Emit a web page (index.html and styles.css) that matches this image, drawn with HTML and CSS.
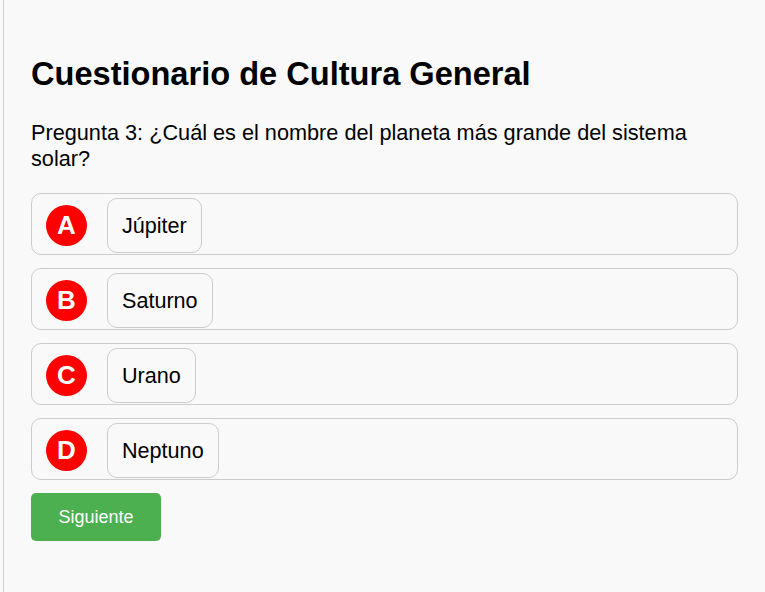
FILE: index.html
```html
<!DOCTYPE html>
<html lang="es">
<head>
<meta charset="utf-8">
<title>Cuestionario de Cultura General</title>
<link rel="stylesheet" href="styles.css">
</head>
<body>
<div class="quiz">
  <h1 class="title">Cuestionario de Cultura General</h1>
  <p class="question">Pregunta 3: ¿Cuál es el nombre del planeta más grande del sistema solar?</p>
  <div class="options">
    <div class="option"><span class="letter">A</span><button class="answer">Júpiter</button></div>
    <div class="option"><span class="letter">B</span><button class="answer">Saturno</button></div>
    <div class="option"><span class="letter">C</span><button class="answer">Urano</button></div>
    <div class="option"><span class="letter">D</span><button class="answer">Neptuno</button></div>
  </div>
  <button class="next">Siguiente</button>
</div>
</body>
</html>
```
FILE: styles.css
```css
html, body {
  margin: 0;
  padding: 0;
  background: #f9f9f9;
}

body {
  font-family: "Liberation Sans", Arial, sans-serif;
  color: #000;
  height: 592px;
}

.quiz {
  margin-left: 3px;
  border-left: 1px solid #cfcfcf;
  padding: 55px 27px 0 27px;
  min-height: 592px;
  box-sizing: border-box;
}

.title {
  margin: 0 0 28px 0;
  font-size: 32.6px;
  line-height: 37px;
  font-weight: bold;
}

.question {
  margin: 0 0 21px 0;
  font-size: 21.7px;
}

.options {
  display: flex;
  flex-direction: column;
  gap: 13px;
  margin-bottom: 13px;
}

.option {
  display: flex;
  align-items: center;
  height: 62px;
  box-sizing: border-box;
  border: 1px solid #cccccc;
  border-radius: 10px;
  padding: 4px 14px 1px 14px;
}

.letter {
  flex: none;
  width: 41px;
  height: 41px;
  border-radius: 50%;
  background: #ff0000;
  color: #fff;
  font-weight: bold;
  font-size: 26px;
  display: flex;
  align-items: center;
  justify-content: center;
  margin-right: 20px;
}

.answer {
  font-family: "Liberation Sans", Arial, sans-serif;
  font-size: 21.6px;
  line-height: 25px;
  color: #000;
  background: #f9f9f9;
  border: 1px solid #cccccc;
  border-radius: 10px;
  padding: 14px 14px;
  height: 55px;
  box-sizing: border-box;
}

.next {
  font-family: "Liberation Sans", Arial, sans-serif;
  font-size: 18px;
  line-height: 48px;
  height: 48px;
  padding: 0 27px;
  width: 130px;
  background: #4caf50;
  color: #fff;
  border: none;
  border-radius: 5px;
}
```
